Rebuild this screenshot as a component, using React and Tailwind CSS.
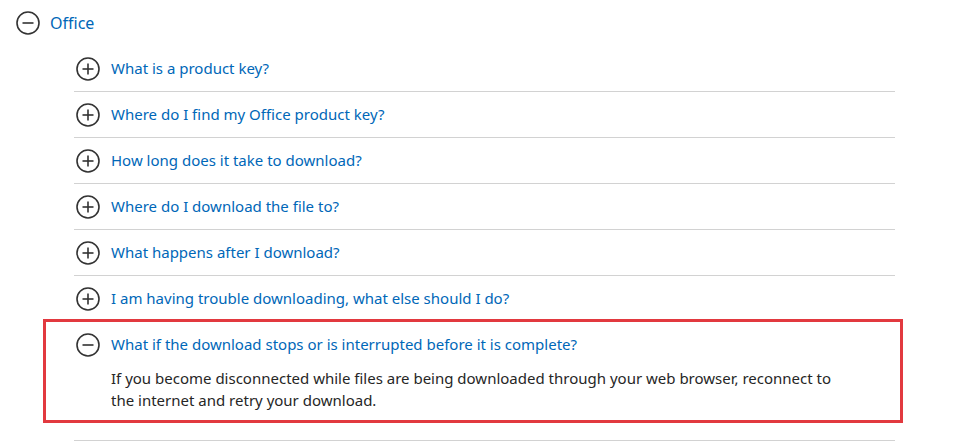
import { Fragment } from 'react';

const questions = [
  'What is a product key?',
  'Where do I find my Office product key?',
  'How long does it take to download?',
  'Where do I download the file to?',
  'What happens after I download?',
  'I am having trouble downloading, what else should I do?',
];

function ToggleIcon({ open }) {
  return (
    <svg width="24" height="24" viewBox="0 0 24 24" className="shrink-0" fill="none" stroke="#333333" strokeWidth="1.6">
      <circle cx="12" cy="12" r="11" />
      <line x1="6.5" y1="12" x2="17.5" y2="12" />
      {!open && <line x1="12" y1="6.5" x2="12" y2="17.5" />}
    </svg>
  );
}

export default function App() {
  return (
    <div className="min-h-[443px] bg-white pl-4 font-['Noto_Sans',sans-serif]">
      <div className="flex h-[46px] items-center gap-[10px]">
        <ToggleIcon open />
        <span className="text-[16px] text-[#0067b8]">Office</span>
      </div>

      <div className="ml-[58px] w-[821px]">
        {questions.map((q) => (
          <Fragment key={q}>
            <div className="flex h-[46px] items-center gap-[11px] border-b border-[#d2d2d2] pl-[2px]">
              <ToggleIcon />
              <span className="text-[15px] text-[#0067b8]">{q}</span>
            </div>
          </Fragment>
        ))}

        <div className="relative border-b border-[#d2d2d2] pb-[29px]">
          <div className="flex h-[45px] items-center gap-[11px] pl-[2px]">
            <ToggleIcon open />
            <span className="text-[15px] text-[#0067b8]">What if the download stops or is interrupted before it is complete?</span>
          </div>
          <p className="pl-[37px] pr-[40px] text-[15px] leading-[22px] text-[#262626]">
            If you become disconnected while files are being downloaded through your web browser, reconnect to the internet and retry your download.
          </p>
          <div className="pointer-events-none absolute left-[-31px] top-[-3px] h-[104px] w-[860px] border-[3px] border-[#e2393f]" />
        </div>
      </div>
    </div>
  );
}
